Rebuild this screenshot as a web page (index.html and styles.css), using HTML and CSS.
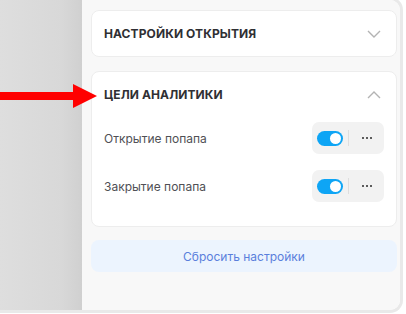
FILE: index.html
```html
<!DOCTYPE html>
<html lang="ru">
<head>
<meta charset="utf-8">
<link rel="stylesheet" href="styles.css">
</head>
<body>
<div class="window">
  <div class="sidebar"></div>
  <div class="panel">
    <div class="card">
      <div class="card-header">
        <span class="card-title">НАСТРОЙКИ ОТКРЫТИЯ</span>
        <svg class="chev" width="14" height="8" viewBox="0 0 14 8"><path d="M1 1l6 6 6-6" fill="none" stroke="#b3b3b3" stroke-width="1.4"/></svg>
      </div>
    </div>
    <div class="card">
      <div class="card-header">
        <span class="card-title">ЦЕЛИ АНАЛИТИКИ</span>
        <svg class="chev" width="14" height="8" viewBox="0 0 14 8"><path d="M1 7l6-6 6 6" fill="none" stroke="#b3b3b3" stroke-width="1.4"/></svg>
      </div>
      <div class="card-body">
        <div class="row">
          <span class="row-label">Открытие попапа</span>
          <div class="controls">
            <span class="toggle"><span class="knob"></span></span>
            <span class="divider"></span>
            <span class="more"><i></i><i></i><i></i></span>
          </div>
        </div>
        <div class="row">
          <span class="row-label">Закрытие попапа</span>
          <div class="controls">
            <span class="toggle"><span class="knob"></span></span>
            <span class="divider"></span>
            <span class="more"><i></i><i></i><i></i></span>
          </div>
        </div>
      </div>
    </div>
    <button class="reset">Сбросить настройки</button>
  </div>
</div>
<svg class="arrow" width="98" height="26" viewBox="0 0 98 26"><path d="M0 8h73V0l24 12L73 24v-8H0z" fill="#ff0000"/></svg>
</body>
</html>
```
FILE: styles.css
```css
html, body {
  margin: 0;
  padding: 0;
  background: #ffffff;
  width: 406px;
  height: 314px;
  overflow: hidden;
  font-family: Inter, "Noto Sans", sans-serif;
  position: relative;
}
.window {
  display: flex;
  width: 400px;
  height: 310px;
  margin-top: -3px;
  border: 3px solid #e9e9e9;
  border-left: none;
  border-radius: 0 13px 13px 0;
  overflow: hidden;
}
.sidebar {
  width: 82px;
  flex: none;
  background: linear-gradient(to right, #dedede, #d8d8d8 75%, #d0d0d0);
}
.panel {
  flex: 1;
  background: #f8f8f8;
  padding: 10px 3px 0 9px;
  display: flex;
  flex-direction: column;
}
.card {
  background: #ffffff;
  border: 1px solid #ededed;
  border-radius: 8px;
  margin-bottom: 13px;
}
.card:first-child {
  margin-bottom: 14px;
}
.card-header {
  height: 45px;
  display: flex;
  align-items: center;
  justify-content: space-between;
  padding: 0 15px 0 12px;
}
.card-title {
  font-size: 12px;
  font-weight: 700;
  color: #2f2f33;
  letter-spacing: 0.1px;
}
.chev { display: block; }
.card-body {
  padding: 5px 12px 24px 12px;
  display: flex;
  flex-direction: column;
  gap: 16px;
}
.row {
  height: 32px;
  display: flex;
  align-items: center;
  justify-content: space-between;
}
.row-label {
  font-size: 12px;
  color: #505055;
}
.controls {
  width: 72px;
  height: 32px;
  background: #f2f2f2;
  border-radius: 7px;
  display: flex;
  align-items: center;
  padding-left: 5px;
  box-sizing: border-box;
}
.toggle {
  width: 26px;
  height: 15px;
  border-radius: 8px;
  background: #0ea5f5;
  position: relative;
  flex: none;
}
.knob {
  position: absolute;
  right: 2px;
  top: 2px;
  width: 11px;
  height: 11px;
  border-radius: 50%;
  background: #ffffff;
}
.divider {
  width: 1px;
  height: 16px;
  background: #dedede;
  margin-left: 5px;
}
.more {
  display: flex;
  gap: 2px;
  margin-left: 13px;
}
.more i {
  width: 2px;
  height: 2px;
  background: #2a2a2a;
  border-radius: 1px;
}
.reset {
  height: 32px;
  width: 100%;
  border: none;
  border-radius: 8px;
  background: #ecf4fe;
  color: #5a7fdc;
  font-family: Inter, "Noto Sans", sans-serif;
  font-size: 12px;
  margin-top: 0;
}
.arrow {
  position: absolute;
  left: 0;
  top: 84px;
}
```
